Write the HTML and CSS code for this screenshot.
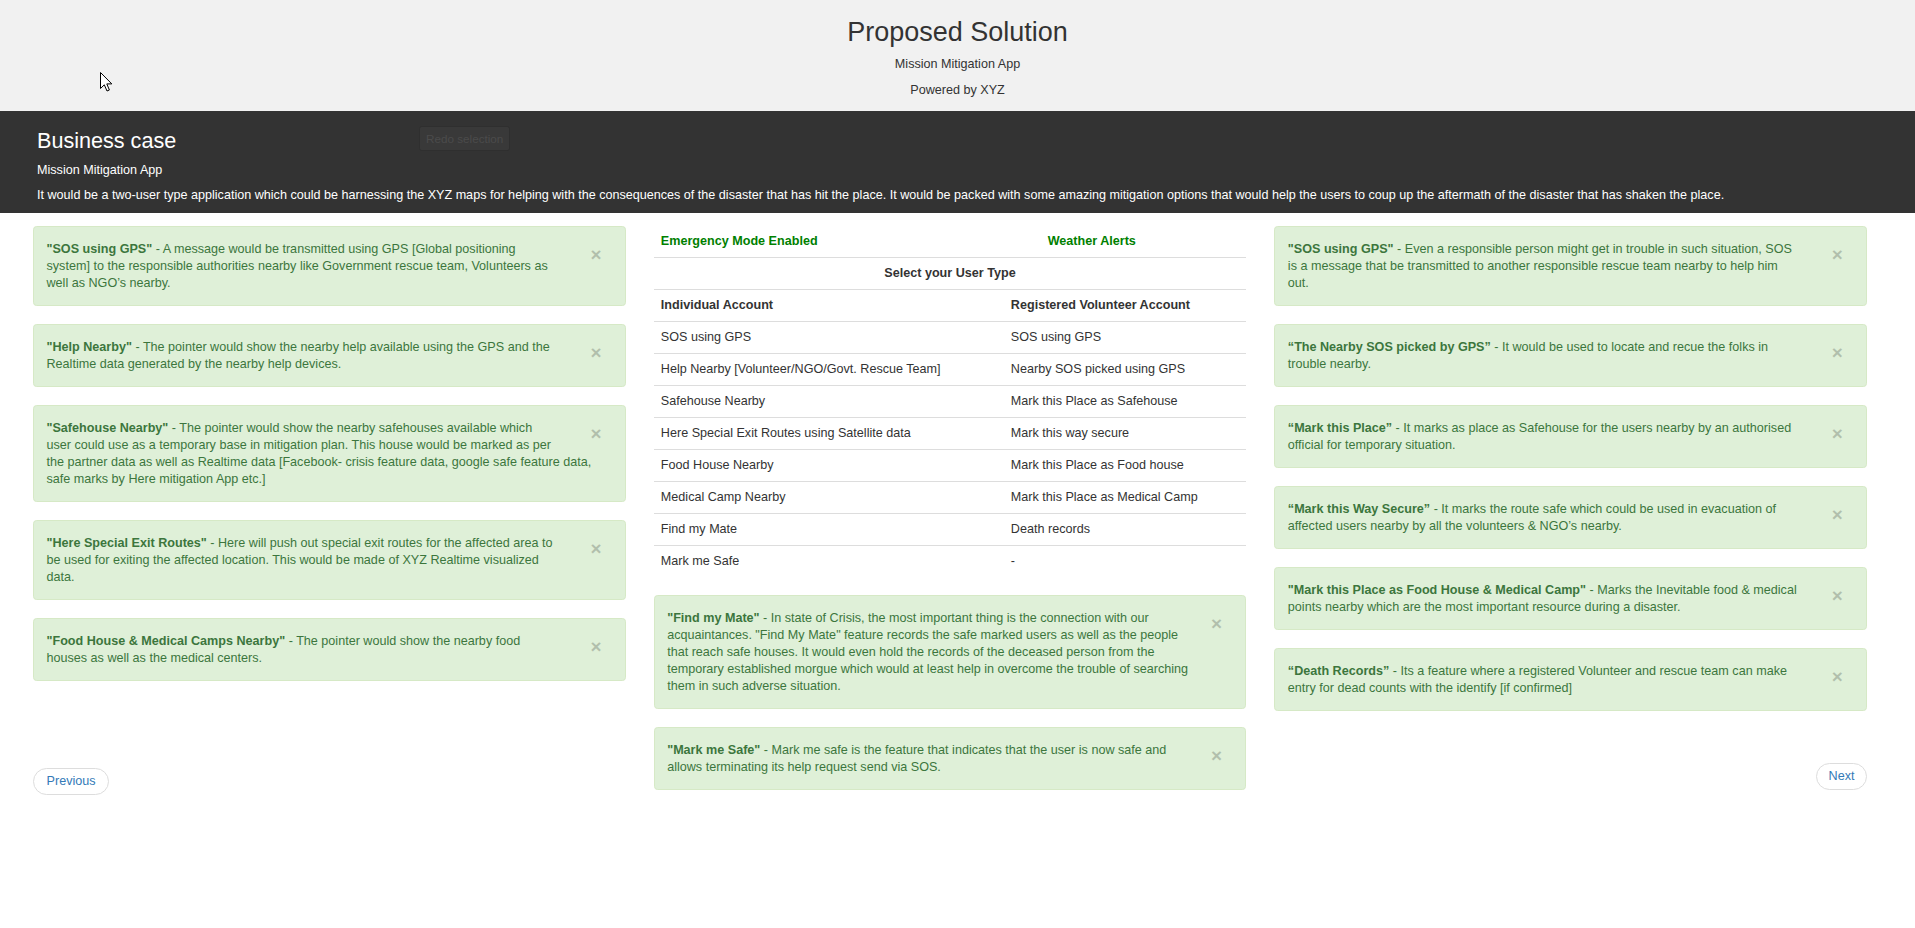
FILE: index.html
```html
<!DOCTYPE html>
<html lang="en">
<head>
<meta charset="utf-8">
<title>Proposed Solution</title>
<link rel="stylesheet" href="styles.css">
</head>
<body>
<header class="top">
  <h2 class="top-title">Proposed Solution</h2>
  <p class="top-line">Mission Mitigation App</p>
  <p class="top-line last">Powered by XYZ</p>
  <svg class="cursor" width="13" height="20" viewBox="0 0 13 20"><path d="M0.5 0.5 L0.5 16.5 L4.3 12.8 L7 19 L9.4 18 L6.8 11.9 L11.8 11.9 Z" fill="#fff" stroke="#000" stroke-width="1" stroke-linejoin="miter"/></svg>
</header>

<section class="band">
  <div class="band-row">
    <h3 class="band-title">Business case</h3>
    <button class="redo">Redo selection</button>
  </div>
  <p class="band-sub">Mission Mitigation App</p>
  <p class="band-desc">It would be a two-user type application which could be harnessing the XYZ maps for helping with the consequences of the disaster that has hit the place. It would be packed with some amazing mitigation options that would help the users to coup up the aftermath of the disaster that has shaken the place.</p>
</section>

<main class="cols">
  <div class="col">
    <div class="alert"><button class="close">&times;</button><strong>"SOS using GPS"</strong> - A message would be transmitted using GPS [Global positioning system] to the responsible authorities nearby like Government rescue team, Volunteers as well as NGO’s nearby.</div>
    <div class="alert"><button class="close">&times;</button><strong>"Help Nearby"</strong> - The pointer would show the nearby help available using the GPS and the Realtime data generated by the nearby help devices.</div>
    <div class="alert"><button class="close">&times;</button><strong>"Safehouse Nearby"</strong> - The pointer would show the nearby safehouses available which user could use as a temporary base in mitigation plan. This house would be marked as per the partner data as well as Realtime data [Facebook- crisis feature data, google safe feature data, safe marks by Here mitigation App etc.]</div>
    <div class="alert"><button class="close">&times;</button><strong>"Here Special Exit Routes"</strong> - Here will push out special exit routes for the affected area to be used for exiting the affected location. This would be made of XYZ Realtime visualized data.</div>
    <div class="alert"><button class="close">&times;</button><strong>"Food House &amp; Medical Camps Nearby"</strong> - The pointer would show the nearby food houses as well as the medical centers.</div>
    <div class="pager pager-left"><a class="pill" href="#">Previous</a></div>
  </div>

  <div class="col">
    <table class="table">
      <colgroup><col class="c1"><col class="c2"></colgroup>
      <tr class="first"><td class="green">Emergency Mode Enabled</td><td class="green weather">Weather Alerts</td></tr>
      <tr><th colspan="2" class="center">Select your User Type</th></tr>
      <tr><th>Individual Account</th><th>Registered Volunteer Account</th></tr>
      <tr><td>SOS using GPS</td><td>SOS using GPS</td></tr>
      <tr><td>Help Nearby [Volunteer/NGO/Govt. Rescue Team]</td><td>Nearby SOS picked using GPS</td></tr>
      <tr><td>Safehouse Nearby</td><td>Mark this Place as Safehouse</td></tr>
      <tr><td>Here Special Exit Routes using Satellite data</td><td>Mark this way secure</td></tr>
      <tr><td>Food House Nearby</td><td>Mark this Place as Food house</td></tr>
      <tr><td>Medical Camp Nearby</td><td>Mark this Place as Medical Camp</td></tr>
      <tr><td>Find my Mate</td><td>Death records</td></tr>
      <tr><td>Mark me Safe</td><td>-</td></tr>
    </table>
    <div class="alert"><button class="close">&times;</button><strong>"Find my Mate"</strong> - In state of Crisis, the most important thing is the connection with our acquaintances. "Find My Mate" feature records the safe marked users as well as the people that reach safe houses. It would even hold the records of the deceased person from the temporary established morgue which would at least help in overcome the trouble of searching them in such adverse situation.</div>
    <div class="alert"><button class="close">&times;</button><strong>"Mark me Safe"</strong> - Mark me safe is the feature that indicates that the user is now safe and allows terminating its help request send via SOS.</div>
  </div>

  <div class="col">
    <div class="alert"><button class="close">&times;</button><strong>"SOS using GPS"</strong> - Even a responsible person might get in trouble in such situation, SOS is a message that be transmitted to another responsible rescue team nearby to help him out.</div>
    <div class="alert"><button class="close">&times;</button><strong>“The Nearby SOS picked by GPS”</strong> - It would be used to locate and recue the folks in trouble nearby.</div>
    <div class="alert"><button class="close">&times;</button><strong>“Mark this Place”</strong> - It marks as place as Safehouse for the users nearby by an authorised official for temporary situation.</div>
    <div class="alert"><button class="close">&times;</button><strong>“Mark this Way Secure”</strong> - It marks the route safe which could be used in evacuation of affected users nearby by all the volunteers &amp; NGO’s nearby.</div>
    <div class="alert"><button class="close">&times;</button><strong>"Mark this Place as Food House &amp; Medical Camp"</strong> - Marks the Inevitable food &amp; medical points nearby which are the most important resource during a disaster.</div>
    <div class="alert"><button class="close">&times;</button><strong>“Death Records”</strong> - Its a feature where a registered Volunteer and rescue team can make entry for dead counts with the identify [if confirmed]</div>
    <div class="pager pager-right"><a class="pill" href="#">Next</a></div>
  </div>
</main>
</body>
</html>
```

FILE: styles.css
```css
* { box-sizing: border-box; }

html, body {
  margin: 0;
  padding: 0;
  background: #fff;
}

body {
  font-family: "Liberation Sans", Arial, Helvetica, sans-serif;
  font-size: 12.6px;
  line-height: 17px;
  color: #333;
}

/* ---------- top header ---------- */
.top {
  position: relative;
  background: #f1f1f1;
  text-align: center;
  padding: 17.5px 0 0;
  height: 111px;
}

.top-title {
  margin: 0 0 9px;
  font-size: 27px;
  line-height: 29.7px;
  font-weight: 400;
  color: #333;
}

.top-line {
  margin: 0 0 9px;
  color: #333;
}

.top-line.last { margin: 0; }

.cursor {
  position: absolute;
  left: 100px;
  top: 72px;
}

/* ---------- dark band ---------- */
.band {
  background: #333;
  color: #fff;
  padding: 17.6px 37px 0;
  height: 102px;
}

.band-row {
  display: flex;
  align-items: flex-start;
}

.band-title {
  flex: 0 0 382px;
  margin: 0 0 9.4px;
  font-size: 21.6px;
  line-height: 23.8px;
  font-weight: 400;
}

.redo {
  margin-top: -2.6px;
  font-family: inherit;
  font-size: 11.7px;
  line-height: 17px;
  padding: 3px 6px;
  background: #393939;
  border: 1px solid #2f2f2f;
  border-radius: 2.7px;
  color: #4b4b4b;
}

.band-sub {
  margin: 0 0 8.3px;
}

.band-desc {
  margin: 0;
  white-space: nowrap;
}

/* ---------- columns ---------- */
.cols {
  display: grid;
  grid-template-columns: repeat(3, 1fr);
  column-gap: 28px;
  padding: 13px 48px 0 33px;
  align-items: start;
}

.col {
  display: flex;
  flex-direction: column;
}

/* ---------- alerts ---------- */
.alert {
  background: #dff0d8;
  border: 1px solid #d6e9c6;
  border-radius: 3.6px;
  color: #3c763d;
  padding: 13.5px 32px 13.5px 12.5px;
  margin-bottom: 18px;
  line-height: 17px;
}

.alert strong { font-weight: 700; }

.close {
  float: right;
  position: relative;
  right: -8.8px;
  width: 33.6px;
  height: 23.8px;
  padding: 4.8px 0 0 0;
  margin: 0;
  border: 0;
  background: transparent;
  text-align: right;
  font-family: "Liberation Sans", Arial, sans-serif;
  font-size: 18.9px;
  font-weight: 700;
  line-height: 19px;
  color: #000;
  opacity: 0.2;
}

/* ---------- table ---------- */
.table {
  width: 100%;
  table-layout: fixed;
  border-collapse: collapse;
  border-spacing: 0;
  margin: -1px 0 18px;
}

.table .c1 { width: 350px; }

.table td,
.table th {
  padding: 7px 7.2px;
  line-height: 17px;
  text-align: left;
  vertical-align: top;
  border-top: 1px solid #ddd;
  color: #333;
}

.table th { font-weight: 700; }

.table tr.first td {
  border-top: 0;
  padding-top: 8px;
}

.table .green {
  color: #008000;
  font-weight: 700;
}

.table .weather { padding-left: 44px; }

.table th.center { text-align: center; }

/* ---------- pager ---------- */
.pager {
  display: flex;
}

.pager-left { margin-top: 69px; }

.pager-right {
  margin-top: 34.3px;
  justify-content: flex-end;
}

.pill {
  display: inline-block;
  padding: 4px 12.6px;
  line-height: 17px;
  border: 1px solid #ddd;
  border-radius: 14px;
  background: #fff;
  color: #337ab7;
  text-decoration: none;
}

.pager-right .pill { padding: 4px 11.5px; }
```
